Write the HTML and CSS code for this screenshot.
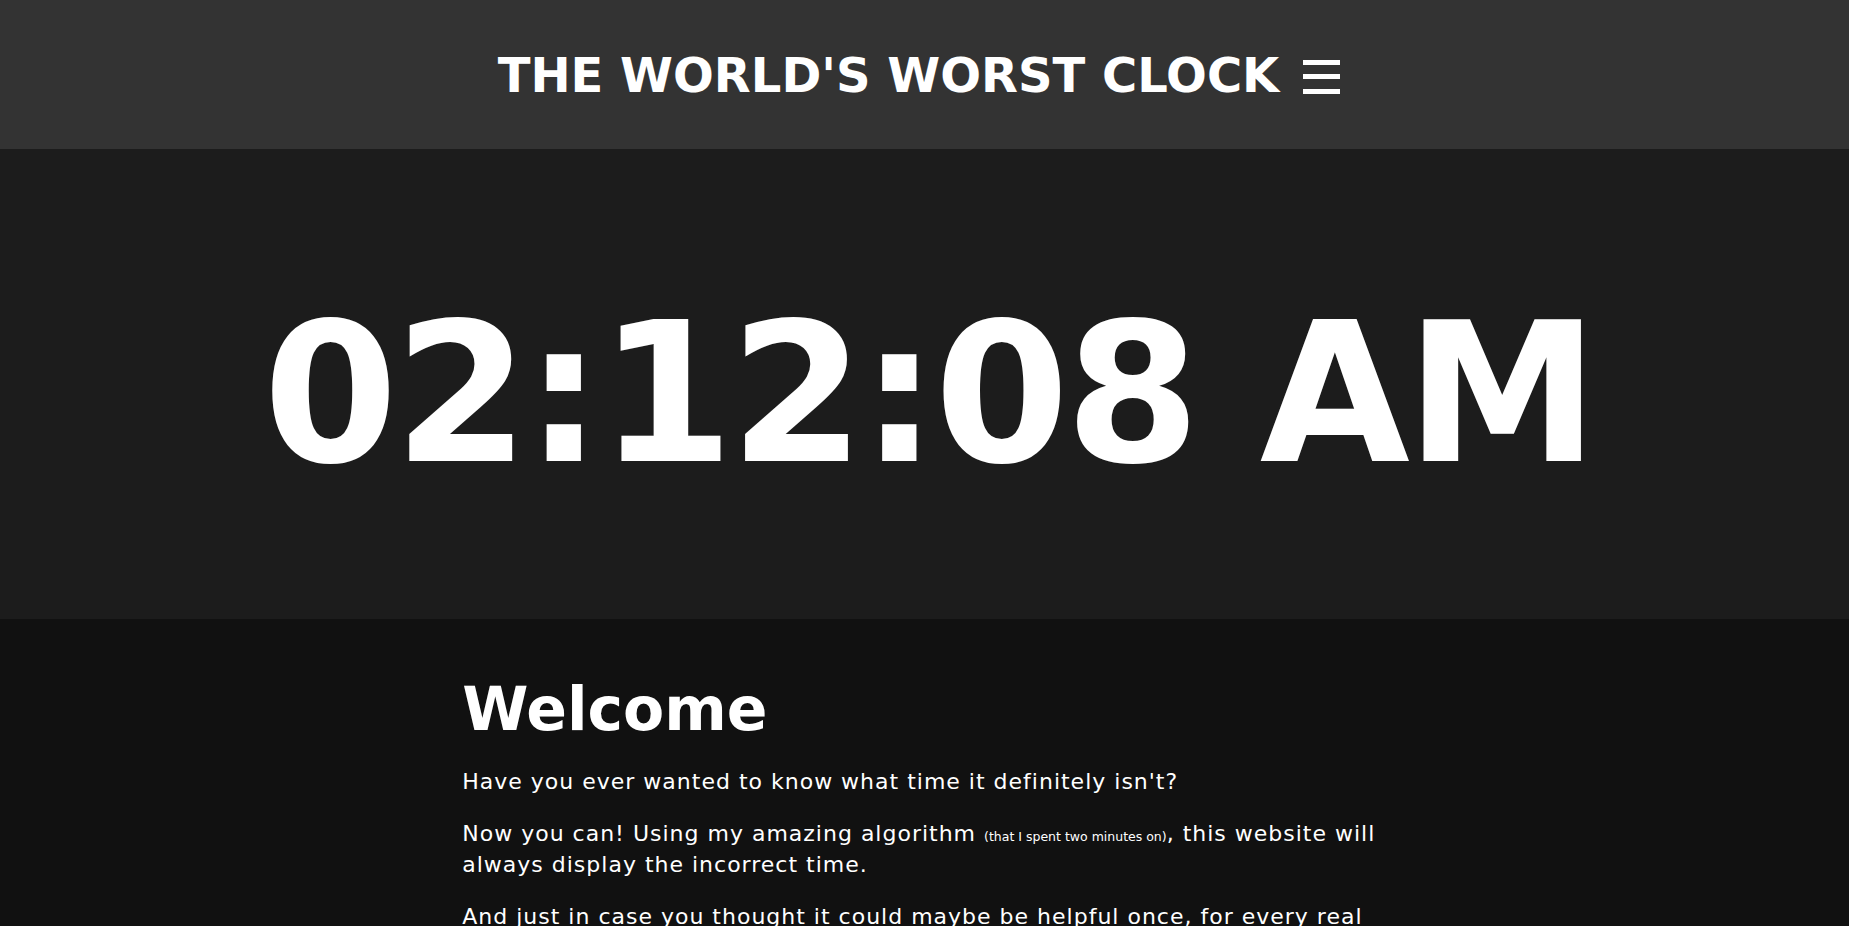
FILE: index.html
```html
<!DOCTYPE html>
<html lang="en">
<head>
<meta charset="utf-8">
<title>The World's Worst Clock</title>
<link rel="stylesheet" href="styles.css">
</head>
<body>
<header class="topbar">
  <h1 class="title">THE WORLD'S WORST CLOCK</h1>
  <span class="menu" role="button" aria-label="Menu"><i></i><i></i><i></i></span>
</header>
<section class="clock-wrap">
  <div class="clock">02:12:08 AM</div>
</section>
<main class="content">
  <h2 class="welcome">Welcome</h2>
  <p>Have you ever wanted to know what time it definitely isn't?</p>
  <p>Now you can! Using my amazing algorithm <small class="aside">(that I spent two minutes on)</small>, this website will always display the incorrect time.</p>
  <p>And just in case you thought it could maybe be helpful once, for every real second that passes, the clock will show a completely different time.</p>
</main>
</body>
</html>
```

FILE: styles.css
```css
html, body {
  margin: 0;
  padding: 0;
}
body {
  background: #111111;
  color: #ffffff;
  font-family: "DejaVu Sans", Verdana, sans-serif;
}
.topbar {
  background: #333333;
  height: 149px;
  display: flex;
  align-items: center;
  justify-content: center;
  gap: 24px;
}
.title {
  margin: 0;
  font-size: 48px;
  font-weight: bold;
  line-height: 1;
  white-space: nowrap;
}
.menu {
  display: flex;
  flex-direction: column;
  gap: 9.5px;
  width: 37px;
  margin-top: 4px;
  margin-right: 11px;
}
.menu i {
  display: block;
  height: 5px;
  background: #ffffff;
}
.clock-wrap {
  background: #1c1c1c;
  height: 470px;
  display: flex;
  align-items: center;
  justify-content: center;
}
.clock {
  font-size: 194px;
  font-weight: bold;
  letter-spacing: -4px;
  line-height: 1;
  padding-top: 20px;
  padding-left: 9px;
  white-space: nowrap;
}
.content {
  width: 50%;
  margin: 0 auto;
  padding-top: 54px;
}
.welcome {
  margin: 0 0 23px 0;
  font-size: 60px;
  font-weight: bold;
  line-height: 72px;
}
.content p {
  margin: 0 0 24px 0;
  font-size: 22px;
  line-height: 28px;
  letter-spacing: 1px;
}
.aside {
  font-size: 12.5px;
  letter-spacing: 0;
}
```
